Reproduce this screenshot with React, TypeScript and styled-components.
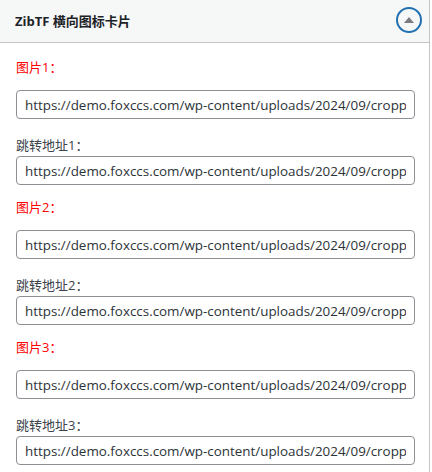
import React from "react";
import styled, { createGlobalStyle } from "styled-components";

const Global = createGlobalStyle`
  html, body { margin: 0; padding: 0; background: #fff; }
  body { font-family: "Open Sans", "Noto Sans CJK SC", sans-serif; }
  * { box-sizing: border-box; }
`;

const Panel = styled.div`
  width: 430px;
  border-right: 1px solid #c3c4c7;
  background: #fff;
  min-height: 472px;
`;

const Header = styled.div`
  height: 43px;
  display: flex;
  align-items: center;
  justify-content: space-between;
  padding: 0 7px 1px 15px;
  background: #f6f7f7;
  border-bottom: 1px solid #c3c4c7;
`;

const Title = styled.h2`
  margin: 0;
  font-size: 13px;
  font-weight: 700;
  color: #1d2327;
  font-family: "Open Sans", "Noto Sans CJK SC", sans-serif;
  line-height: 20px;
`;

const Toggle = styled.button`
  width: 26px;
  height: 26px;
  border-radius: 50%;
  border: 2px solid #2271b1;
  background: transparent;
  padding: 0;
  display: flex;
  align-items: center;
  justify-content: center;
  margin-bottom: 2px;
`;

const Body = styled.div`
  padding: 14px 14px 0 16px;
  display: flex;
  flex-direction: column;
`;

const Label = styled.div<{ $red?: boolean; $gap: number; $top: number }>`
  font-size: 13px;
  line-height: 20px;
  color: ${(p) => (p.$red ? "#ff0000" : "#3c434a")};
  margin-top: ${(p) => p.$top}px;
  margin-bottom: ${(p) => p.$gap}px;
  font-family: "Open Sans", "Noto Sans CJK SC", sans-serif;
`;

const Input = styled.input`
  display: block;
  width: 399px;
  height: 29px;
  border: 1px solid #8c8f94;
  border-radius: 4px;
  padding: 0 8px;
  font-size: 13.4px;
  color: #2c3338;
  font-family: "Open Sans", "Noto Sans CJK SC", sans-serif;
  background: #fff;
  outline: none;
`;

const items = [
  { n: 1, img: "https://demo.foxccs.com/wp-content/uploads/2024/09/cropped-icon-1.png", url: "https://demo.foxccs.com/wp-content/uploads/2024/09/cropped-icon-1.png" },
  { n: 2, img: "https://demo.foxccs.com/wp-content/uploads/2024/09/cropped-icon-2.png", url: "https://demo.foxccs.com/wp-content/uploads/2024/09/cropped-icon-2.png" },
  { n: 3, img: "https://demo.foxccs.com/wp-content/uploads/2024/09/cropped-icon-3.png", url: "https://demo.foxccs.com/wp-content/uploads/2024/09/cropped-icon-3.png" },
];

export default function App() {
  return (
    <>
      <Global />
      <Panel>
        <Header>
          <Title>ZibTF 横向图标卡片</Title>
          <Toggle aria-label="toggle">
            <svg width="10" height="6" viewBox="0 0 10 6">
              <path d="M5 0 L10 6 L0 6 Z" fill="#787c82" />
            </svg>
          </Toggle>
        </Header>
        <Body>
          {items.map((it, i) => (
            <React.Fragment key={it.n}>
              <Label $red $top={i === 0 ? 0 : 12} $gap={13}>
                图片{it.n}：
              </Label>
              <Input readOnly value={it.img} />
              <Label $top={16} $gap={1}>
                跳转地址{it.n}：
              </Label>
              <Input readOnly value={it.url} />
            </React.Fragment>
          ))}
        </Body>
      </Panel>
    </>
  );
}
